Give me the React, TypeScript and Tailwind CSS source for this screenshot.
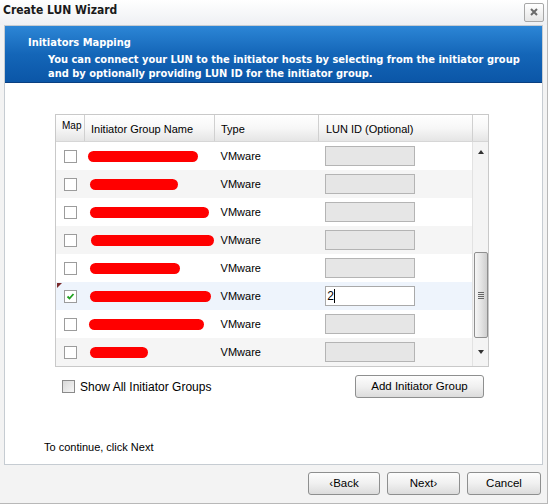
const font = "font-['Liberation_Sans',sans-serif]";
const boldFont = "font-['DejaVu_Sans_Condensed','DejaVu_Sans',sans-serif]";

type Row = { width: number; offset: number; checked?: boolean; value?: string };

const rows: Row[] = [
  { width: 110, offset: 3 },
  { width: 88, offset: 5 },
  { width: 119, offset: 5 },
  { width: 123, offset: 6 },
  { width: 90, offset: 5 },
  { width: 121, offset: 5, checked: true, value: "2" },
  { width: 115, offset: 4 },
  { width: 58, offset: 5 },
];

const Checkbox = ({ checked }: { checked?: boolean }) => (
  <div className="w-[13px] h-[13px] border border-[#9c9c9c] bg-white flex items-center justify-center">
    {checked && (
      <svg width="9" height="9" viewBox="0 0 9 9">
        <path d="M1.5 4.5 L3.5 6.5 L7.5 2" stroke="#21a121" strokeWidth="1.8" fill="none" />
      </svg>
    )}
  </div>
);

const XpButton = ({ label, className }: { label: string; className: string }) => (
  <button
    type="button"
    className={`h-[23px] rounded-[3px] border border-[#8e8f8f] bg-gradient-to-b from-[#fdfdfd] via-[#f0f0f0] to-[#dcdcdc] text-[11.5px] text-black font-['Liberation_Sans',sans-serif] ${className}`}
  >
    {label}
  </button>
);

const TableRow = ({ row, index }: { row: Row; index: number }) => {
  const bg = row.checked ? "bg-[#eef4fc]" : index % 2 === 1 ? "bg-[#f5f5f5]" : "bg-white";
  return (
    <div className={`relative flex items-center h-[28px] ${bg}`}>
      {row.checked && (
        <div className="absolute left-[1px] top-[1px] w-0 h-0 border-t-[5px] border-t-[#7a2a2a] border-r-[5px] border-r-transparent" />
      )}
      <div className="w-[29px] flex justify-center pl-[1px]">
        <Checkbox checked={row.checked} />
      </div>
      <div className="w-[130px] flex items-center">
        <div
          className="h-[11px] rounded-full bg-[#ff0000]"
          style={{ width: row.width, marginLeft: row.offset }}
        />
      </div>
      <div className="w-[104px] pl-[6px] text-[11px] text-black">VMware</div>
      <div className="w-[154px] pl-[7px]">
        {row.value ? (
          <div className="w-[90px] h-[20px] border border-[#a9a9a9] bg-white flex items-center pl-[1px] text-[12px] text-black">
            {row.value}
            <span className="w-[1px] h-[14px] bg-black" />
          </div>
        ) : (
          <div className="w-[90px] h-[20px] border border-[#b4b4b4] bg-[#e6e6e6]" />
        )}
      </div>
    </div>
  );
};

const App = () => {
  return (
    <div className={`w-[548px] h-[504px] bg-[#f3f3f3] border-r border-b border-[#b8b8b8] flex flex-col ${font}`}>
      <div className="h-[25px] flex items-center justify-between pl-[3px] pr-[3px] bg-gradient-to-b from-white to-[#eef0f3]">
        <span className={`text-[12px] font-bold text-[#1a1a1a] -mt-[5px] ${boldFont}`}>Create LUN Wizard</span>
        <div className="w-[20px] h-[19px] border border-[#a7a7a7] rounded-[2px] bg-gradient-to-b from-white to-[#e6e6e6] flex items-center justify-center -mt-[1px]">
          <svg width="10" height="10" viewBox="0 0 10 10">
            <path d="M2 2 L8 8 M8 2 L2 8" stroke="#6b6b6b" strokeWidth="2" />
          </svg>
        </div>
      </div>

      <div className="mx-[4px] h-[440px] border border-[#c6ccd2] bg-white flex flex-col">
        <div className={`h-[57px] border-b border-[#0a3f80] bg-gradient-to-b from-[#2c86d6] via-[#1466b8] to-[#0b56a7] text-white font-bold text-[11px] leading-[14px] pt-[10px] whitespace-nowrap ${boldFont}`}>
          <div className="pl-[23px]">Initiators Mapping</div>
          <div className="pl-[43px] pt-[3px]">
            You can connect your LUN to the initiator hosts by selecting from the initiator group
            <br />
            and by optionally providing LUN ID for the initiator group.
          </div>
        </div>

        <div className="pl-[50px] pt-[31px]">
          <div className="w-[434px] border border-[#c9c9c9] bg-white">
            <div className="flex h-[27px] bg-gradient-to-b from-white via-[#f7f7f7] to-[#e5e5e5] border-b border-[#d6d6d6] text-[11px] text-black">
              <div className="w-[29px] border-r border-[#d0d0d0] pl-[6px] pt-[3px] text-[10px]">Map</div>
              <div className="w-[130px] border-r border-[#d0d0d0] pl-[6px] pt-[2px] flex items-center">Initiator Group Name</div>
              <div className="w-[104px] border-r border-[#d0d0d0] pl-[6px] pt-[2px] flex items-center">Type</div>
              <div className="w-[154px] border-r border-[#d0d0d0] pl-[7px] pt-[2px] flex items-center">LUN ID (Optional)</div>
              <div className="flex-1" />
            </div>
            <div className="flex">
              <div className="w-[416px]">
                {rows.map((row, i) => (
                  <TableRow key={i} row={row} index={i} />
                ))}
              </div>
              <div className="flex-1 bg-[#f4f4f4] border-l border-[#e2e2e2] flex flex-col items-center">
                <div className="h-[20px] flex items-center justify-center">
                  <div className="w-0 h-0 border-l-[3px] border-r-[3px] border-b-[4px] border-l-transparent border-r-transparent border-b-[#333]" />
                </div>
                <div className="h-[90px]" />
                <div className="w-[14px] h-[86px] rounded-[2px] border border-[#8f8f8f] bg-gradient-to-r from-[#f6f6f6] via-[#e4e4e4] to-[#cfcfcf] flex items-center justify-center">
                  <div className="flex flex-col gap-[1px]">
                    <div className="w-[6px] h-[1px] bg-[#666]" />
                    <div className="w-[6px] h-[1px] bg-[#666]" />
                    <div className="w-[6px] h-[1px] bg-[#666]" />
                    <div className="w-[6px] h-[1px] bg-[#666]" />
                  </div>
                </div>
                <div className="flex-1 flex items-center justify-center">
                  <div className="w-0 h-0 border-l-[3px] border-r-[3px] border-t-[4px] border-l-transparent border-r-transparent border-t-[#333]" />
                </div>
              </div>
            </div>
          </div>

          <div className="w-[434px] flex items-center justify-between mt-[8px] pl-[7px] pr-[5px]">
            <div className="flex items-center gap-[5px] text-[12px] text-black">
              <div className="w-[13px] h-[13px] border border-[#8a8a8a] bg-gradient-to-br from-[#d8d8d8] to-[#f6f6f6]" />
              <span>Show All Initiator Groups</span>
            </div>
            <XpButton label="Add Initiator Group" className="w-[129px]" />
          </div>
        </div>

        <div className="pl-[39px] pt-[41px] text-[11px] text-black">To continue, click Next</div>
      </div>

      <div className="flex justify-end gap-[7px] pr-[6px] pt-[7px]">
        <XpButton label="‹Back" className="w-[72px]" />
        <XpButton label="Next›" className="w-[73px]" />
        <XpButton label="Cancel" className="w-[74px]" />
      </div>
    </div>
  );
};

export default App;
